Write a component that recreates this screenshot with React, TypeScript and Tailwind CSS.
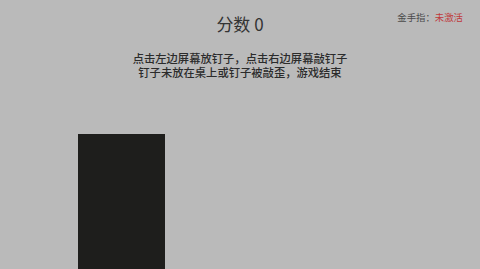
export default function App() {
  return (
    <div className="relative h-[269px] w-[480px] overflow-hidden bg-[#bababa] font-['Noto_Sans_CJK_SC',sans-serif]">
      <div className="absolute right-[17px] top-[10px] text-[9.4px] leading-[14px] text-[#4a4a4a]">
        金手指：<span className="text-[#c0393b]">未激活</span>
      </div>
      <div className="flex flex-col items-center pt-[12px]">
        <div className="text-[17px] leading-[24px] text-[#333333]">分数 0</div>
        <div className="mt-[15px] text-center text-[11.3px] font-medium leading-[14px] text-[#2b2b2b]">
          <p>点击左边屏幕放钉子，点击右边屏幕敲钉子</p>
          <p>钉子未放在桌上或钉子被敲歪，游戏结束</p>
        </div>
      </div>
      <div className="absolute left-[78px] top-[134px] h-[135px] w-[87px] bg-[#1e1e1c]" />
    </div>
  );
}
